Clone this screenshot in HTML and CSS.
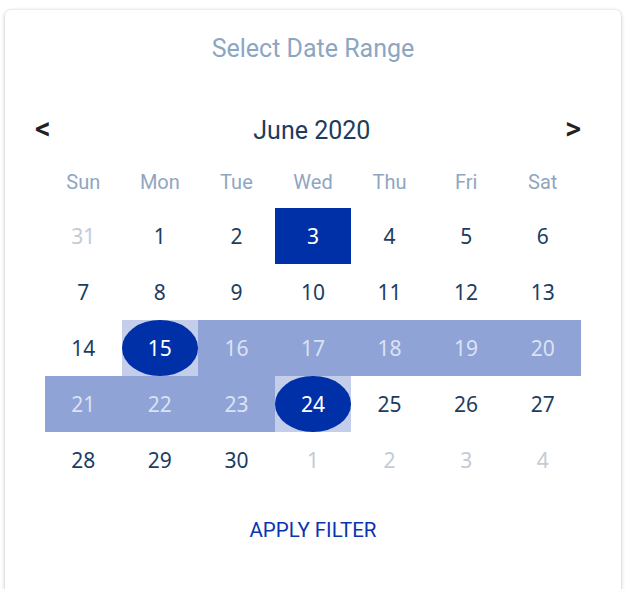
FILE: index.html
```html
<!DOCTYPE html>
<html lang="en">
<head>
<meta charset="utf-8">
<title>Select Date Range</title>
<link rel="stylesheet" href="styles.css">
</head>
<body>
<div class="card">
  <h2 class="title">Select Date Range</h2>
  <div class="nav">
    <button class="arrow" aria-label="Previous month">&lt;</button>
    <div class="month">June 2020</div>
    <button class="arrow" aria-label="Next month">&gt;</button>
  </div>
  <div class="grid">
    <div class="wd">Sun</div><div class="wd">Mon</div><div class="wd">Tue</div><div class="wd">Wed</div><div class="wd">Thu</div><div class="wd">Fri</div><div class="wd">Sat</div>

    <div class="day muted">31</div><div class="day">1</div><div class="day">2</div><div class="day today">3</div><div class="day">4</div><div class="day">5</div><div class="day">6</div>

    <div class="day">7</div><div class="day">8</div><div class="day">9</div><div class="day">10</div><div class="day">11</div><div class="day">12</div><div class="day">13</div>

    <div class="day">14</div><div class="day edge"><span>15</span></div><div class="day range">16</div><div class="day range">17</div><div class="day range">18</div><div class="day range">19</div><div class="day range">20</div>

    <div class="day range">21</div><div class="day range">22</div><div class="day range">23</div><div class="day edge"><span>24</span></div><div class="day">25</div><div class="day">26</div><div class="day">27</div>

    <div class="day">28</div><div class="day">29</div><div class="day">30</div><div class="day muted">1</div><div class="day muted">2</div><div class="day muted">3</div><div class="day muted">4</div>
  </div>
  <div class="actions">
    <button class="apply">APPLY FILTER</button>
  </div>
</div>
</body>
</html>
```

FILE: styles.css
```css
* { box-sizing: border-box; }
html, body { margin: 0; background: #ffffff; }
body {
  padding: 10px 0 0 5px;
  font-family: Roboto, "Liberation Sans", sans-serif;
  overflow: hidden;
}
.card {
  width: 616px;
  min-height: 620px;
  background: #fff;
  border-radius: 6px;
  box-shadow: 0 1px 4px rgba(0,0,0,0.22), 0 0 2px rgba(0,0,0,0.08);
  padding: 24px 40px 0;
}
.title {
  margin: 0 0 45px;
  font-size: 25px;
  line-height: 30px;
  font-weight: 400;
  text-align: center;
  color: #8ba6c3;
}
.nav {
  height: 40px;
  margin: 0 0 7px -10px;
  display: flex;
  align-items: center;
  justify-content: space-between;
}
.arrow {
  border: 0;
  background: none;
  padding: 0;
  font-family: Roboto, sans-serif;
  font-size: 31px;
  font-weight: 500;
  line-height: 40px;
  color: #222;
  cursor: pointer;
}
.month {
  font-size: 25px;
  color: #1d3c5e;
  margin-left: 8px;
  padding-top: 2px;
}
.grid {
  display: grid;
  grid-template-columns: repeat(7, 1fr);
  grid-auto-rows: 56px;
  grid-template-rows: 52px;
}
.wd {
  display: flex;
  align-items: center;
  justify-content: center;
  font-size: 20px;
  color: #8fa6c1;
}
.day {
  display: flex;
  align-items: center;
  justify-content: center;
  font-family: "Noto Sans", sans-serif;
  font-size: 21px;
  color: #1c3d62;
}
.day.muted { color: #c3cbd6; }
.day.today { background: #0030a8; color: #fff; }
.day.range { background: #8fa3d7; color: #dbe2f3; }
.day.edge { background: #c4cdea; color: #fff; }
.day.edge span {
  width: 100%;
  height: 100%;
  border-radius: 50%;
  background: #0030a8;
  display: flex;
  align-items: center;
  justify-content: center;
}
.actions {
  margin-top: 30px;
  text-align: center;
}
.apply {
  border: 0;
  background: none;
  padding: 0;
  font-family: Roboto, sans-serif;
  font-size: 20.5px;
  line-height: 24px;
  color: #0a35ae;
  cursor: pointer;
}
```
